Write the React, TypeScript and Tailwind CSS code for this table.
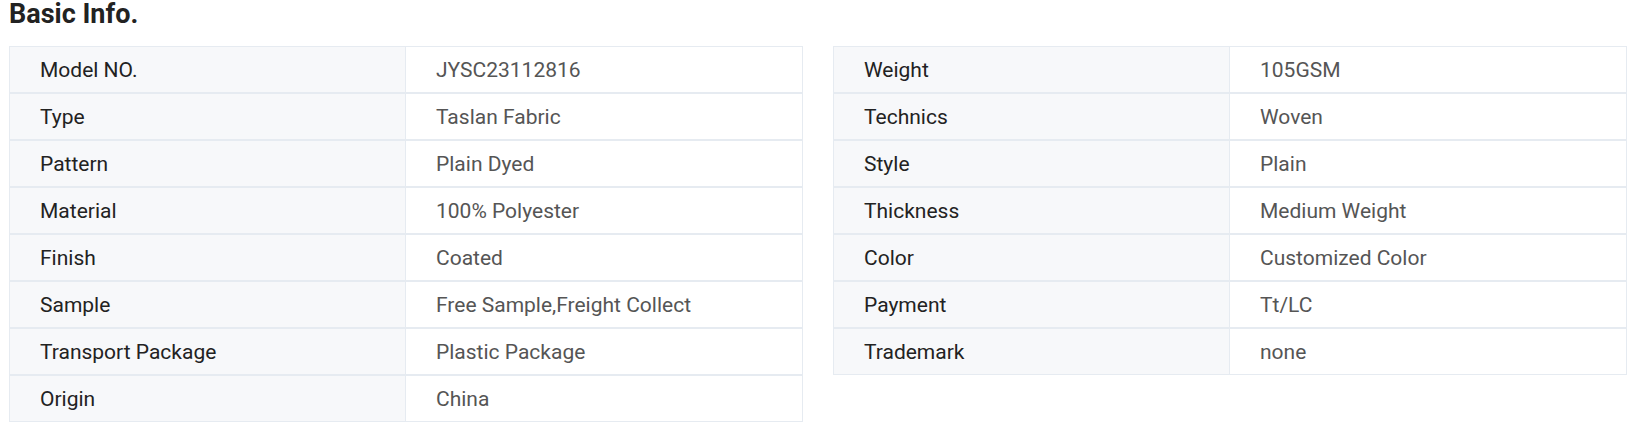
import React from "react";

const left: [string, string][] = [
  ["Model NO.", "JYSC23112816"],
  ["Type", "Taslan Fabric"],
  ["Pattern", "Plain Dyed"],
  ["Material", "100% Polyester"],
  ["Finish", "Coated"],
  ["Sample", "Free Sample,Freight Collect"],
  ["Transport Package", "Plastic Package"],
  ["Origin", "China"],
];

const right: [string, string][] = [
  ["Weight", "105GSM"],
  ["Technics", "Woven"],
  ["Style", "Plain"],
  ["Thickness", "Medium Weight"],
  ["Color", "Customized Color"],
  ["Payment", "Tt/LC"],
  ["Trademark", "none"],
];

function Table({ rows }: { rows: [string, string][] }) {
  return (
    <div className="w-[794px] flex flex-col">
      {rows.map(([k, v]) => (
        <div key={k} className="flex h-[47px] border border-[#e6ebf1]">
          <div className="w-[396px] bg-[#f7f8fa] border-r border-[#e6ebf1] flex items-center pl-[30px] pt-[2px] text-[21px] text-[#222222]">
            {k}
          </div>
          <div className="flex-1 bg-white flex items-center pl-[30px] pt-[2px] text-[21px] text-[#555555]">
            {v}
          </div>
        </div>
      ))}
    </div>
  );
}

export default function App() {
  return (
    <div className="w-[1648px] h-[433px] bg-white pl-[9px]" style={{ fontFamily: "Roboto, 'Noto Sans', sans-serif" }}>
      <h2 className="text-[27px] font-bold leading-[28px] text-[#222222]">Basic Info.</h2>
      <div className="mt-[18px] flex items-start gap-[30px]">
        <Table rows={left} />
        <Table rows={right} />
      </div>
    </div>
  );
}
